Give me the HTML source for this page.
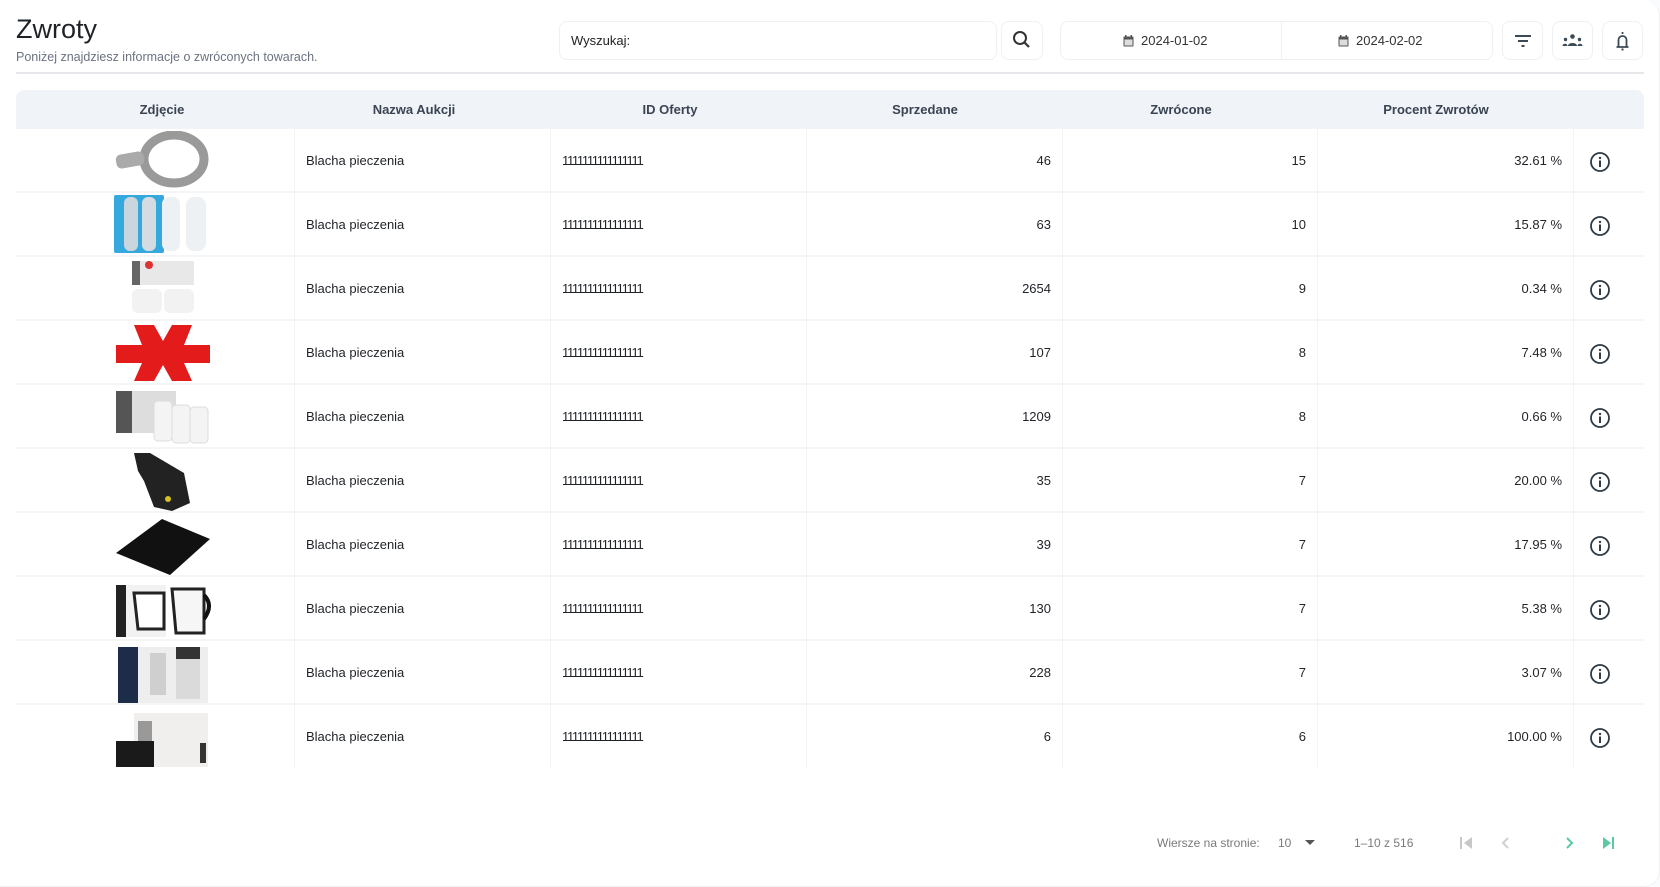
<!DOCTYPE html>
<html><head><meta charset="utf-8">
<style>
*{box-sizing:border-box;margin:0;padding:0}
body{width:1660px;height:887px;background:#fafbfc;font-family:"Liberation Sans",sans-serif;color:#1f2328;position:relative;overflow:hidden}
.card{position:absolute;left:0;top:0;width:1660px;height:887px;background:#fff;border-radius:0 16px 16px 0;border-right:1px solid #f0f1f3;border-bottom:1px solid #f0f1f3}
.abs{position:absolute}
h1{position:absolute;left:16px;top:14px;font-size:27px;font-weight:400;color:#1e2328}
.sub{left:16px;top:50px;font-size:12.5px;color:#6b7280}
.sep{left:16px;top:72px;width:1628px;height:2px;background:#e6e7ea}
.box{border:1px solid #eef0f2;border-radius:8px;background:#fff}
.th{top:90px;height:39px;left:16px;width:1628px;background:#f0f3f8;border-radius:8px 8px 0 0}
.hc{position:absolute;top:102px;font-size:13px;font-weight:bold;color:#3a4452;text-align:center;width:256px}
.row{position:absolute;left:16px;width:1628px;height:64px;border-bottom:2px solid #f4f5f7}
.vl{position:absolute;top:129px;width:1px;height:640px;background:#f3f4f6}
.c{position:absolute;font-size:13px;color:#1f2328;top:24px}
.id{letter-spacing:-1.3px}
.r{text-align:right;width:233px}
.img{position:absolute;left:98px;top:2px;width:98px;height:60px}
.pg{font-size:12px;color:#7a7a7a;top:836px}
</style></head><body>
<div class="card"></div>
<h1>Zwroty</h1>
<div class="abs sub">Poniżej znajdziesz informacje o zwróconych towarach.</div>
<div class="abs sep"></div>

<div class="abs box" style="left:559px;top:21px;width:438px;height:39px"><span style="position:absolute;left:11px;top:11px;font-size:13px;color:#222">Wyszukaj:</span></div>
<div class="abs box" style="left:1001px;top:21px;width:42px;height:39px">
<svg width="40" height="37" viewBox="0 0 40 37"><circle cx="18" cy="16" r="6" fill="none" stroke="#333" stroke-width="2"/><line x1="22.5" y1="20.5" x2="27" y2="25" stroke="#333" stroke-width="2.2"/></svg></div>
<div class="abs box" style="left:1060px;top:21px;width:433px;height:39px">
<div style="position:absolute;left:220px;top:0;width:1px;height:37px;background:#eef0f2"></div>
<svg class="abs" style="left:62px;top:13px" width="11" height="12" viewBox="0 0 11 12"><rect x="0.5" y="1.5" width="10" height="10" rx="1" fill="#555"/><rect x="1.5" y="4.5" width="8" height="6" fill="#ddd"/><rect x="2" y="0" width="1.5" height="3" fill="#555"/><rect x="7.5" y="0" width="1.5" height="3" fill="#555"/></svg>
<span class="abs" style="left:80px;top:11px;font-size:13px;color:#333">2024-01-02</span>
<svg class="abs" style="left:277px;top:13px" width="11" height="12" viewBox="0 0 11 12"><rect x="0.5" y="1.5" width="10" height="10" rx="1" fill="#555"/><rect x="1.5" y="4.5" width="8" height="6" fill="#ddd"/><rect x="2" y="0" width="1.5" height="3" fill="#555"/><rect x="7.5" y="0" width="1.5" height="3" fill="#555"/></svg>
<span class="abs" style="left:295px;top:11px;font-size:13px;color:#333">2024-02-02</span>
</div>
<div class="abs box" style="left:1502px;top:21px;width:41px;height:39px"><svg width="39" height="37"><rect x="12" y="13" width="16" height="2" fill="#3b4a55"/><rect x="15" y="18" width="10" height="2" fill="#3b4a55"/><rect x="18.5" y="23" width="3" height="2" fill="#3b4a55"/></svg></div>
<div class="abs box" style="left:1552px;top:21px;width:41px;height:39px"><svg width="39" height="37"><circle cx="19.5" cy="14.5" r="2.3" fill="#3b4a55"/><path d="M15 24c0-4 9-4 9 0z" fill="#3b4a55"/><circle cx="12.5" cy="17.5" r="1.7" fill="#3b4a55"/><circle cx="26.5" cy="17.5" r="1.7" fill="#3b4a55"/><path d="M9.5 24c0-3 5-3 5 0z M24.5 24c0-3 5-3 5 0z" fill="#3b4a55"/></svg></div>
<div class="abs box" style="left:1602px;top:21px;width:41px;height:39px"><svg width="39" height="37"><path d="M19.5 10v2 M15.5 25v-7a4 4 0 0 1 8 0v7 M13.5 25h12" stroke="#3b4a55" stroke-width="1.8" fill="none"/><rect x="18.5" y="26.5" width="2" height="2" fill="#3b4a55"/></svg></div>

<div class="abs th"></div>
<div class="hc" style="left:34px;width:256px">Zdjęcie</div>
<div class="hc" style="left:286px">Nazwa Aukcji</div>
<div class="hc" style="left:542px">ID Oferty</div>
<div class="hc" style="left:797px">Sprzedane</div>
<div class="hc" style="left:1053px">Zwrócone</div>
<div class="hc" style="left:1308px">Procent Zwrotów</div>

<div class="vl" style="left:294px"></div><div class="vl" style="left:550px"></div><div class="vl" style="left:806px"></div><div class="vl" style="left:1062px"></div><div class="vl" style="left:1317px"></div><div class="vl" style="left:1573px"></div>

<div class="row" style="top:129px"><svg class="img" viewBox="0 0 98 60"><ellipse cx="60" cy="28" rx="30" ry="24" fill="none" stroke="#9a9a9a" stroke-width="9"/><rect x="2" y="22" width="28" height="14" rx="5" fill="#aaa" transform="rotate(-10 16 29)"/></svg><span class="c" style="left:290px">Blacha pieczenia</span><span class="c id" style="left:546px">1111111111111111</span><span class="c r" style="left:802px">46</span><span class="c r" style="left:1057px">15</span><span class="c r" style="left:1313px">32.61 %</span></div>
<div class="row" style="top:193px"><svg class="img" viewBox="0 0 98 60"><rect x="0" y="0" width="50" height="58" rx="2" fill="#35a8de"/><rect x="10" y="2" width="14" height="54" rx="6" fill="#c9d6de"/><rect x="28" y="2" width="14" height="54" rx="6" fill="#d4dce2"/><rect x="48" y="2" width="18" height="54" rx="7" fill="#eef1f3"/><rect x="72" y="2" width="20" height="54" rx="8" fill="#eef1f3"/></svg><span class="c" style="left:290px">Blacha pieczenia</span><span class="c id" style="left:546px">1111111111111111</span><span class="c r" style="left:802px">63</span><span class="c r" style="left:1057px">10</span><span class="c r" style="left:1313px">15.87 %</span></div>
<div class="row" style="top:257px"><svg class="img" viewBox="0 0 98 60"><rect x="18" y="2" width="62" height="24" fill="#e8e8e8"/><rect x="18" y="2" width="8" height="24" fill="#666"/><circle cx="35" cy="6" r="4" fill="#d33"/><rect x="18" y="30" width="30" height="24" rx="6" fill="#f2f2f2"/><rect x="50" y="30" width="30" height="24" rx="6" fill="#f2f2f2"/></svg><span class="c" style="left:290px">Blacha pieczenia</span><span class="c id" style="left:546px">1111111111111111</span><span class="c r" style="left:802px">2654</span><span class="c r" style="left:1057px">9</span><span class="c r" style="left:1313px">0.34 %</span></div>
<div class="row" style="top:321px"><svg class="img" viewBox="0 0 98 60"><polygon points="20,2 40,2 49,18 58,2 78,2 70,22 96,22 96,40 70,40 78,58 58,58 49,42 40,58 20,58 28,40 2,40 2,22 28,22" fill="#e31b1b"/></svg><span class="c" style="left:290px">Blacha pieczenia</span><span class="c id" style="left:546px">1111111111111111</span><span class="c r" style="left:802px">107</span><span class="c r" style="left:1057px">8</span><span class="c r" style="left:1313px">7.48 %</span></div>
<div class="row" style="top:385px"><svg class="img" viewBox="0 0 98 60"><rect x="2" y="4" width="60" height="42" fill="#ddd"/><rect x="2" y="4" width="16" height="42" fill="#555"/><rect x="40" y="14" width="18" height="40" rx="4" fill="#f4f4f4" stroke="#ddd"/><rect x="58" y="18" width="18" height="38" rx="4" fill="#f4f4f4" stroke="#ddd"/><rect x="76" y="20" width="18" height="36" rx="4" fill="#f4f4f4" stroke="#ddd"/></svg><span class="c" style="left:290px">Blacha pieczenia</span><span class="c id" style="left:546px">1111111111111111</span><span class="c r" style="left:802px">1209</span><span class="c r" style="left:1057px">8</span><span class="c r" style="left:1313px">0.66 %</span></div>
<div class="row" style="top:449px"><svg class="img" viewBox="0 0 98 60"><polygon points="20,2 36,2 70,22 76,52 58,60 40,56 30,30 24,20" fill="#222"/><circle cx="54" cy="48" r="3" fill="#d8c020"/></svg><span class="c" style="left:290px">Blacha pieczenia</span><span class="c id" style="left:546px">1111111111111111</span><span class="c r" style="left:802px">35</span><span class="c r" style="left:1057px">7</span><span class="c r" style="left:1313px">20.00 %</span></div>
<div class="row" style="top:513px"><svg class="img" viewBox="0 0 98 60"><polygon points="2,38 48,4 96,24 56,60" fill="#111"/></svg><span class="c" style="left:290px">Blacha pieczenia</span><span class="c id" style="left:546px">1111111111111111</span><span class="c r" style="left:802px">39</span><span class="c r" style="left:1057px">7</span><span class="c r" style="left:1313px">17.95 %</span></div>
<div class="row" style="top:577px"><svg class="img" viewBox="0 0 98 60"><rect x="2" y="6" width="10" height="52" fill="#222"/><rect x="12" y="6" width="40" height="52" fill="#f2f2f2"/><path d="M20 14h30v36h-26z" fill="#fff" stroke="#222" stroke-width="3"/><path d="M58 10h32v44h-28z" fill="#f6f6f6" stroke="#222" stroke-width="3"/><path d="M90 16q10 10 0 24" stroke="#111" stroke-width="4" fill="none"/></svg><span class="c" style="left:290px">Blacha pieczenia</span><span class="c id" style="left:546px">1111111111111111</span><span class="c r" style="left:802px">130</span><span class="c r" style="left:1057px">7</span><span class="c r" style="left:1313px">5.38 %</span></div>
<div class="row" style="top:641px"><svg class="img" viewBox="0 0 98 60"><rect x="4" y="4" width="20" height="56" fill="#1d2c48"/><rect x="24" y="4" width="70" height="56" fill="#eee"/><rect x="36" y="10" width="16" height="42" fill="#cfcfcf"/><rect x="62" y="4" width="24" height="12" fill="#333"/><rect x="62" y="16" width="24" height="40" fill="#dadada"/></svg><span class="c" style="left:290px">Blacha pieczenia</span><span class="c id" style="left:546px">1111111111111111</span><span class="c r" style="left:802px">228</span><span class="c r" style="left:1057px">7</span><span class="c r" style="left:1313px">3.07 %</span></div>
<div class="row" style="top:705px;border-bottom:none"><svg class="img" viewBox="0 0 98 60"><rect x="20" y="6" width="74" height="54" fill="#f1efed"/><rect x="2" y="34" width="38" height="26" fill="#1a1a1a"/><rect x="24" y="14" width="14" height="20" fill="#999"/><rect x="86" y="36" width="6" height="20" fill="#333"/></svg><span class="c" style="left:290px">Blacha pieczenia</span><span class="c id" style="left:546px">1111111111111111</span><span class="c r" style="left:802px">6</span><span class="c r" style="left:1057px">6</span><span class="c r" style="left:1313px">100.00 %</span></div>

<svg class="abs" style="left:1589px;top:151px" width="22" height="660">
<defs><g id="i"><circle cx="11" cy="11" r="9" fill="none" stroke="#2e3a44" stroke-width="1.8"/><rect x="10" y="9.5" width="2" height="6.5" fill="#2e3a44"/><circle cx="11" cy="7" r="1.2" fill="#2e3a44"/></g></defs>
<use href="#i" y="0"/><use href="#i" y="64"/><use href="#i" y="128"/><use href="#i" y="192"/><use href="#i" y="256"/><use href="#i" y="320"/><use href="#i" y="384"/><use href="#i" y="448"/><use href="#i" y="512"/><use href="#i" y="576"/>
</svg>

<span class="abs pg" style="left:1157px">Wiersze na stronie:</span>
<span class="abs pg" style="left:1278px">10</span>
<svg class="abs" style="left:1305px;top:840px" width="11" height="6"><path d="M0 0h10l-5 5z" fill="#555"/></svg>
<span class="abs pg" style="left:1354px">1–10 z 516</span>
<svg class="abs" style="left:1459px;top:836px" width="16" height="14"><rect x="1" y="1" width="2" height="12" fill="#c8c8c8"/><path d="M13 1v12l-8-6z" fill="#c8c8c8"/></svg>
<svg class="abs" style="left:1499px;top:836px" width="12" height="14"><path d="M9 2l-5 5 5 5" stroke="#d0d0d0" stroke-width="2" fill="none"/></svg>
<svg class="abs" style="left:1564px;top:836px" width="12" height="14"><path d="M3 2l5 5-5 5" stroke="#5cc8a4" stroke-width="2" fill="none"/></svg>
<svg class="abs" style="left:1601px;top:836px" width="16" height="14"><path d="M2 1v12l8-6z" fill="#5cc8a4"/><rect x="11" y="1" width="2" height="12" fill="#5cc8a4"/></svg>
</body></html>
